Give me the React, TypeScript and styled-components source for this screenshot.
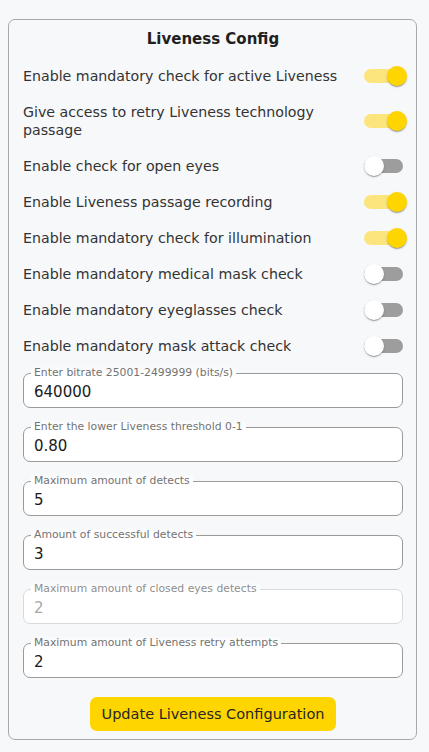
import React, { useState } from "react";
import styled, { createGlobalStyle } from "styled-components";

const Global = createGlobalStyle`
  html, body { margin: 0; padding: 0; background: #f7f8fa; }
  body { font-family: "DejaVu Sans", "Noto Sans", sans-serif; color: #2b2b2b; }
  * { box-sizing: border-box; }
`;

const Page = styled.div`
  padding: 19px 12px 12px 8px;
`;

const Card = styled.form`
  width: 409px;
  border: 1px solid #a9a9ab;
  border-radius: 7px;
  padding: 7px 13px 8px 14px;
  display: flex;
  flex-direction: column;
`;

const Title = styled.h2`
  margin: 0 0 7px;
  text-align: center;
  font-size: 15px;
  line-height: 24px;
  font-weight: 700;
  color: #1f1f1f;
`;

const Row = styled.label`
  display: flex;
  align-items: center;
  justify-content: space-between;
  gap: 16px;
  padding: 9px 0;
  cursor: pointer;
`;

const RowText = styled.span`
  font-size: 14.2px;
  line-height: 18px;
  color: #333;
  flex: 1;
`;

const SwitchBox = styled.span`
  position: relative;
  width: 43px;
  height: 20px;
  flex: none;
  margin: -1px -4px -1px 0;
`;

const Track = styled.span<{ $on: boolean }>`
  position: absolute;
  left: 0;
  top: 3px;
  width: 39px;
  height: 14px;
  border-radius: 7px;
  background: ${(p) => (p.$on ? "#fbe57c" : "#9d9d9d")};
`;

const Thumb = styled.span<{ $on: boolean }>`
  position: absolute;
  top: 0;
  left: ${(p) => (p.$on ? "23px" : "0px")};
  width: 20px;
  height: 20px;
  border-radius: 50%;
  background: ${(p) => (p.$on ? "#ffd500" : "#ffffff")};
  box-shadow: 0 2px 1px -1px rgba(0,0,0,0.2), 0 1px 1px 0 rgba(0,0,0,0.14), 0 1px 3px 0 rgba(0,0,0,0.12);
`;

const Fields = styled.div`
  display: flex;
  flex-direction: column;
  gap: 19px;
  margin-top: 9px;
`;

const Field = styled.div<{ $disabled?: boolean }>`
  position: relative;
  width: 380px;
  height: 35px;
  padding: 0 10px;
  border: 1px solid ${(p) => (p.$disabled ? "#d9d9d9" : "#9a9a9a")};
  border-radius: 7px;
  background: #fff;
  display: flex;
  align-items: center;
`;

const Legend = styled.span<{ $disabled?: boolean }>`
  position: absolute;
  left: 7px;
  top: -8px;
  padding: 0 3px;
  font-size: 10.8px;
  line-height: 14px;
  color: ${(p) => (p.$disabled ? "#8e8e8e" : "#727272")};
  background: linear-gradient(to bottom, #f7f8fa 0%, #fff 45%);
  border-radius: 3px;
  white-space: nowrap;
`;

const Value = styled.input<{ $disabled?: boolean }>`
  border: none;
  outline: none;
  background: transparent;
  width: 100%;
  padding: 0;
  margin-top: 3px;
  font-family: inherit;
  font-size: 15px;
  color: ${(p) => (p.$disabled ? "#a8a8a8" : "#1a1a1a")};
`;

const ButtonRow = styled.div`
  display: flex;
  justify-content: center;
  margin-top: 19px;
`;

const Button = styled.button`
  width: 246px;
  height: 34px;
  border: none;
  border-radius: 7px;
  background: #ffd500;
  color: #262626;
  font-family: inherit;
  font-size: 14.5px;
  cursor: pointer;
`;

const toggles = [
  ["Enable mandatory check for active Liveness", true],
  ["Give access to retry Liveness technology passage", true],
  ["Enable check for open eyes", false],
  ["Enable Liveness passage recording", true],
  ["Enable mandatory check for illumination", true],
  ["Enable mandatory medical mask check", false],
  ["Enable mandatory eyeglasses check", false],
  ["Enable mandatory mask attack check", false],
] as const;

const fields = [
  ["Enter bitrate 25001-2499999 (bits/s)", "640000", false],
  ["Enter the lower Liveness threshold 0-1", "0.80", false],
  ["Maximum amount of detects", "5", false],
  ["Amount of successful detects", "3", false],
  ["Maximum amount of closed eyes detects", "2", true],
  ["Maximum amount of Liveness retry attempts", "2", false],
] as const;

export default function App() {
  const [state, setState] = useState<boolean[]>(toggles.map((t) => t[1]));
  return (
    <Page>
      <Global />
      <Card onSubmit={(e) => e.preventDefault()}>
        <Title>Liveness Config</Title>
        {toggles.map(([label], i) => (
          <Row
            key={label}
            onClick={(e) => {
              e.preventDefault();
              setState((s) => s.map((v, j) => (j === i ? !v : v)));
            }}
          >
            <RowText>{label}</RowText>
            <SwitchBox>
              <Track $on={state[i]} />
              <Thumb $on={state[i]} />
            </SwitchBox>
          </Row>
        ))}
        <Fields>
          {fields.map(([label, value, dis]) => (
            <Field key={label} $disabled={dis}>
              <Legend $disabled={dis}>{label}</Legend>
              <Value $disabled={dis} defaultValue={value} disabled={dis} />
            </Field>
          ))}
        </Fields>
        <ButtonRow>
          <Button type="submit">Update Liveness Configuration</Button>
        </ButtonRow>
      </Card>
    </Page>
  );
}
